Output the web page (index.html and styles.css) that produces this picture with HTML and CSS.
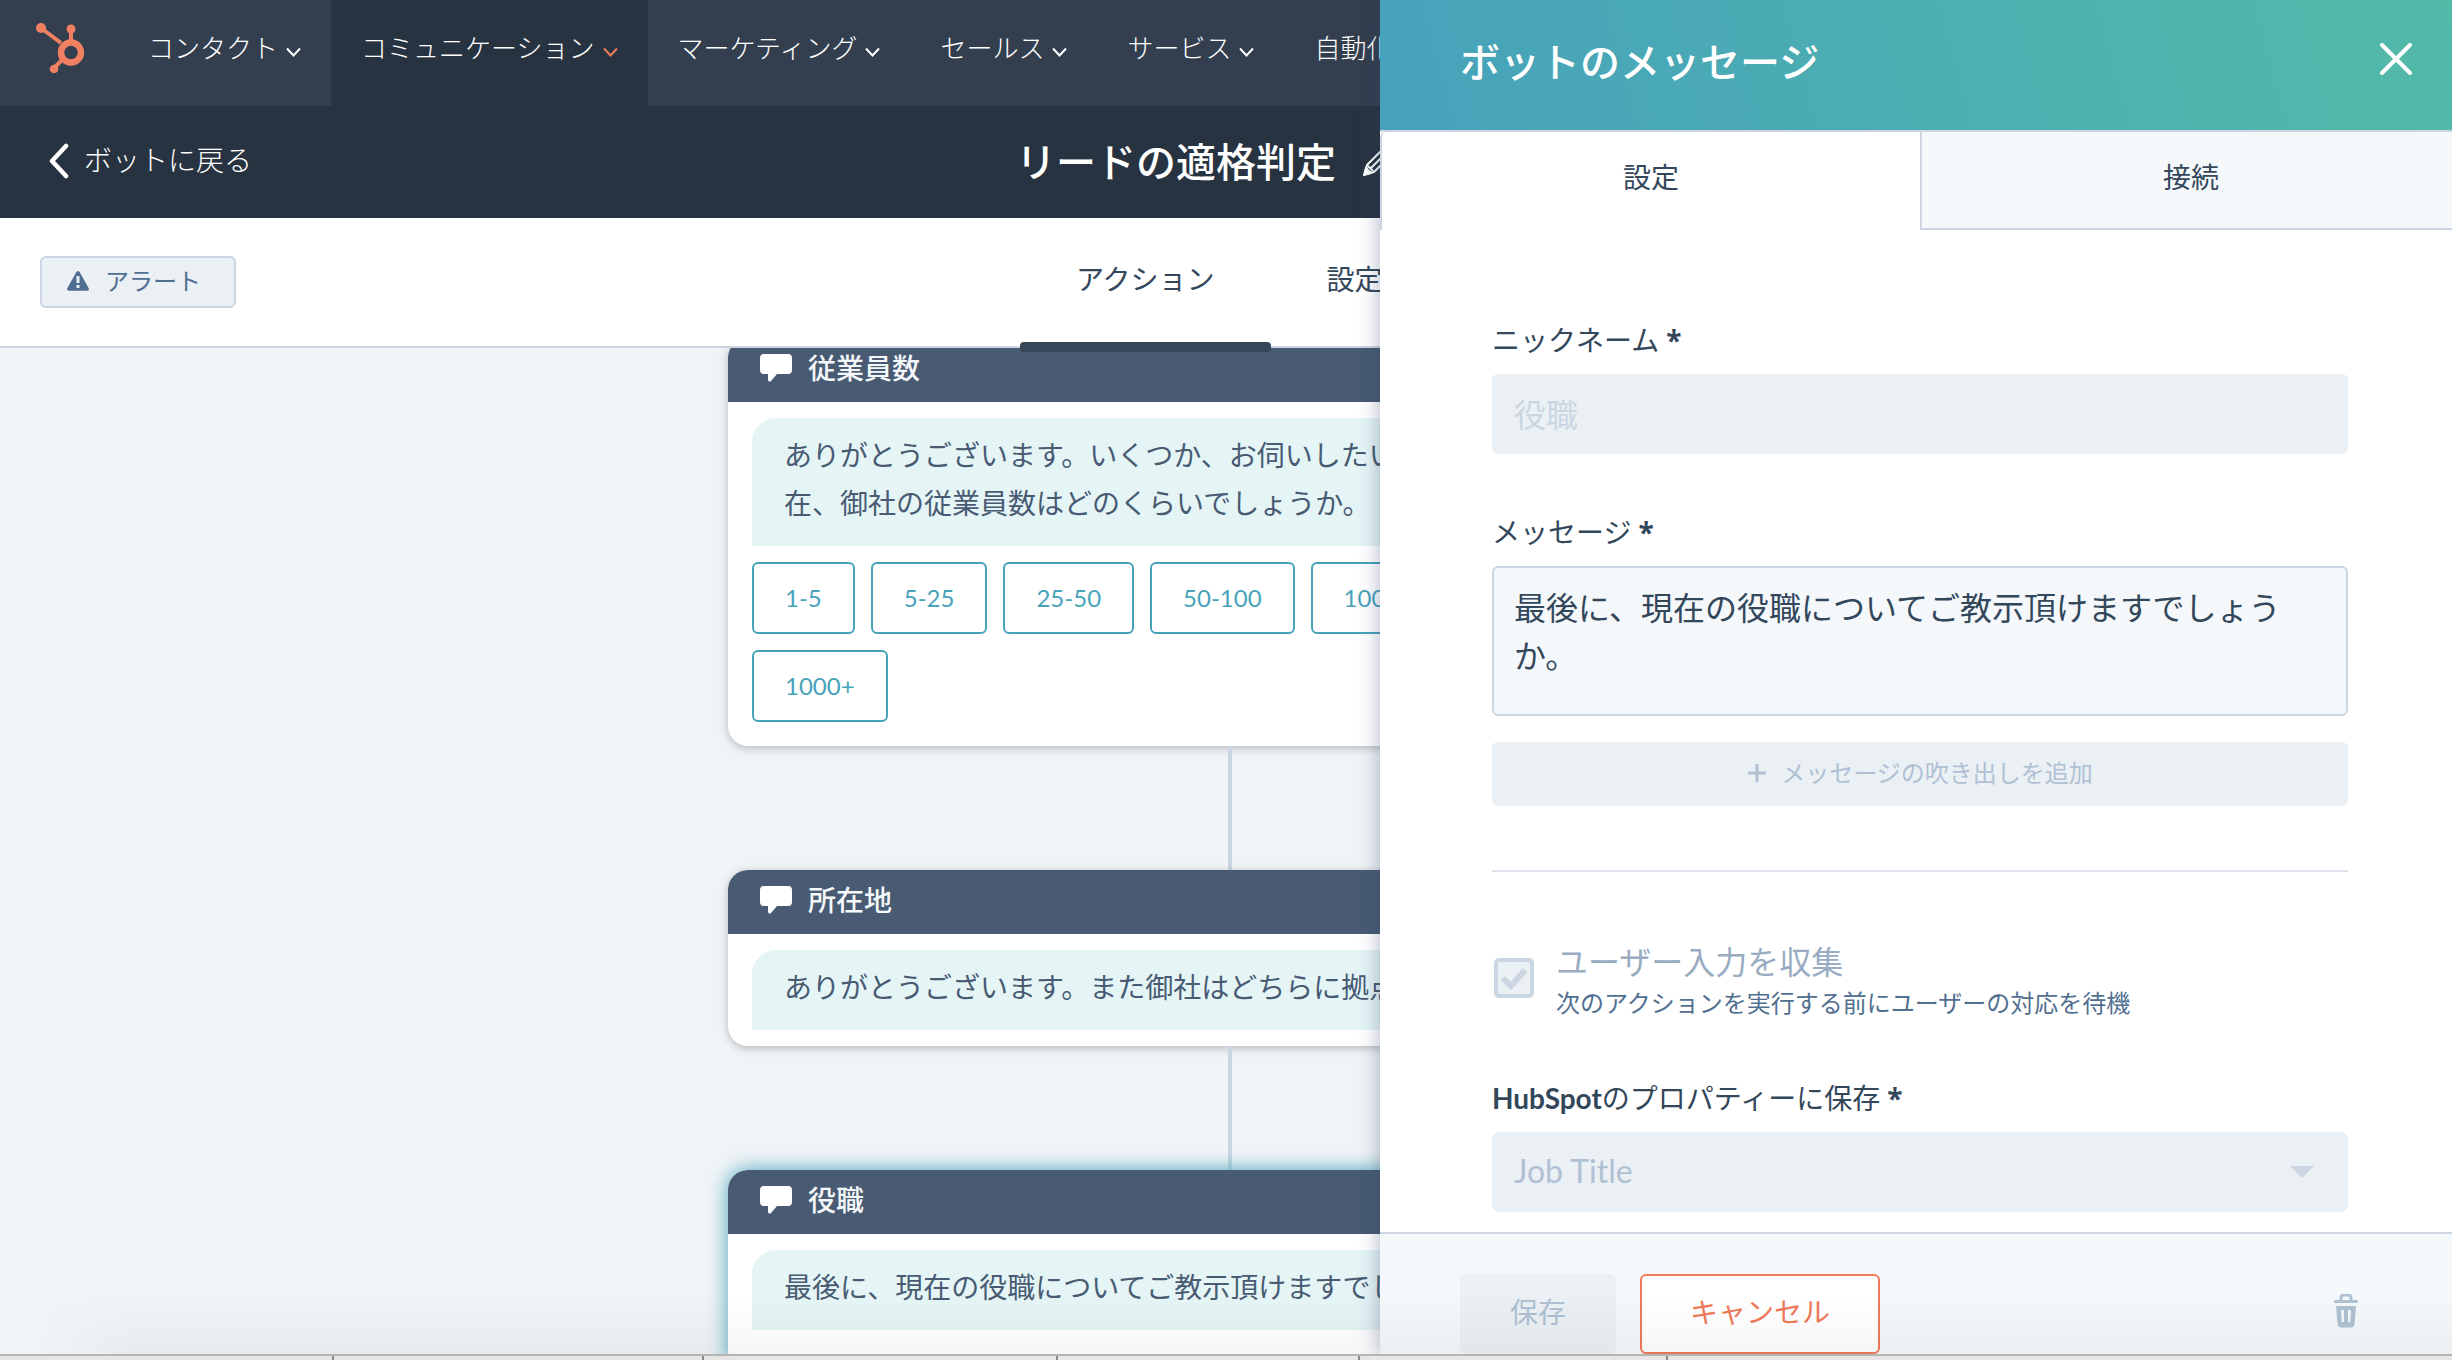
FILE: index.html
```html
<!DOCTYPE html>
<html lang="ja">
<head>
<meta charset="utf-8">
<meta name="viewport" content="width=device-width, initial-scale=1">
<title>リードの適格判定</title>
<link rel="stylesheet" href="styles.css">
</head>
<body>
<svg class="sprite" aria-hidden="true">
  <symbol id="chevron" viewBox="0 0 15 10"><path d="M1 1.500 7.500 8.500 14 1.500" fill="none" stroke="currentColor" stroke-width="2"/></symbol>
  <symbol id="speech" viewBox="0 0 32 28"><path d="M4 0h24a4 4 0 0 1 4 4v12a4 4 0 0 1-4 4H17l-6 7q-2 2-3-1l0-6H4a4 4 0 0 1-4-4V4a4 4 0 0 1 4-4z" fill="currentColor"/></symbol>
</svg>
<div class="app">
  <div class="page">
    <nav class="topnav">
      <a class="logo" href="#" aria-label="ホーム">
        <svg width="48" height="50" viewBox="0 0 48 50" fill="none" stroke="currentColor">
          <path d="M5 5 25 20M35 7v11M26 37l-9 9" stroke-width="4"/>
          <circle cx="35" cy="29.500" r="10" stroke-width="6.500"/>
          <g fill="currentColor" stroke="none"><circle cx="5" cy="5" r="5"/><circle cx="35" cy="6" r="4.500"/><circle cx="18" cy="46" r="4.300"/></g>
        </svg>
      </a>
      <a class="nav-item" href="#">コンタクト<svg class="chev"><use href="#chevron"/></svg></a>
      <a class="nav-item active" href="#">コミュニケーション<svg class="chev"><use href="#chevron"/></svg></a>
      <a class="nav-item" href="#">マーケティング<svg class="chev"><use href="#chevron"/></svg></a>
      <a class="nav-item" href="#">セールス<svg class="chev"><use href="#chevron"/></svg></a>
      <a class="nav-item" href="#">サービス<svg class="chev"><use href="#chevron"/></svg></a>
      <a class="nav-item" href="#">自動化<svg class="chev"><use href="#chevron"/></svg></a>
    </nav>

    <header class="titlebar">
      <a class="back" href="#">
        <svg width="20" height="36" viewBox="0 0 20 36"><path d="M17 3 3 18l14 15" fill="none" stroke="currentColor" stroke-width="4.500" stroke-linecap="round" stroke-linejoin="round"/></svg>
        <span>ボットに戻る</span>
      </a>
      <div class="title-group">
        <h1>リードの適格判定</h1>
        <button class="icon-button" type="button" aria-label="名前を編集">
          <svg width="28" height="28" viewBox="0 0 28 28" fill="none" stroke="currentColor" stroke-width="2" stroke-linejoin="round"><path d="M1.500 26.500 4 17 18 3l7 7-14 14zM5 18l5 5M8 20 21 7" /><path d="m1 27 2-7 5 5z" fill="currentColor"/></svg>
        </button>
      </div>
    </header>

    <div class="toolbar">
      <button class="alert-button" type="button">
        <svg width="22" height="20" viewBox="0 0 22 20"><path d="M9.300 1.200q1.700-2.400 3.400 0l9 16q.8 2.300-1.700 2.500H2q-2.500-.2-1.700-2.500z" fill="currentColor"/><path d="M11 5v7M11 14v3" stroke="#eaf0f4" stroke-width="3"/></svg>
        アラート
      </button>
      <div class="page-tabs">
        <a class="page-tab current" href="#">アクション</a>
        <a class="page-tab" href="#">設定</a>
      </div>
    </div>

    <main class="canvas">
      <div class="flow">
        <article class="card">
          <h2><svg class="speech"><use href="#speech"/></svg>従業員数</h2>
          <p class="bubble">ありがとうございます。いくつか、お伺いしたいことがあります。現在、御社の従業員数はどのくらいでしょうか。</p>
          <div class="options">
            <button type="button">1-5</button>
            <button type="button">5-25</button>
            <button type="button">25-50</button>
            <button type="button">50-100</button>
            <button type="button">100-500</button>
            <button type="button">500-1000</button>
            <button type="button">1000+</button>
          </div>
        </article>
        <div class="link"></div>
        <article class="card">
          <h2><svg class="speech"><use href="#speech"/></svg>所在地</h2>
          <p class="bubble">ありがとうございます。また御社はどちらに拠点がありますか。</p>
        </article>
        <div class="link"></div>
        <article class="card selected">
          <h2><svg class="speech"><use href="#speech"/></svg>役職</h2>
          <p class="bubble">最後に、現在の役職についてご教示頂けますでしょうか。</p>
        </article>
      </div>
    </main>
  </div>

  <aside class="panel">
    <header class="panel-head">
      <h2>ボットのメッセージ</h2>
      <button class="icon-button" type="button" aria-label="閉じる">
        <svg width="32" height="32" viewBox="0 0 32 32"><path d="m2 2 28 28M30 2 2 30" stroke="currentColor" stroke-width="4" stroke-linecap="round"/></svg>
      </button>
    </header>
    <div class="panel-tabs">
      <button class="current" type="button">設定</button>
      <button type="button">接続</button>
    </div>
    <form class="panel-body">
      <label for="nickname">ニックネーム <b class="required">*</b></label>
      <input id="nickname" class="field" type="text" value="役職" disabled>
      <label for="message">メッセージ <b class="required">*</b></label>
      <textarea id="message" class="field">最後に、現在の役職についてご教示頂けますでしょうか。</textarea>
      <button class="add-button" type="button" disabled>
        <svg width="20" height="20" viewBox="0 0 20 20"><path d="M10 1v18M1 10h18" stroke="currentColor" stroke-width="3"/></svg>
        メッセージの吹き出しを追加
      </button>
      <hr>
      <div class="check-row">
        <span class="check-box">
          <input id="collect" type="checkbox" checked disabled>
          <svg width="28" height="24" viewBox="0 0 28 24"><path d="m3 12 8 8L25 4" fill="none" stroke="#cbd6e2" stroke-width="6"/></svg>
        </span>
        <label class="check-label" for="collect">ユーザー入力を収集<small>次のアクションを実行する前にユーザーの対応を待機</small></label>
      </div>
      <label for="property" class="property-label"><b>HubSpot</b>のプロパティーに保存 <b class="required">*</b></label>
      <span class="select-box">
        <select id="property" class="field" disabled><option>Job Title</option></select>
        <svg width="24" height="12" viewBox="0 0 24 12"><path d="M0 0h24L12 12z" fill="#cbd6e2"/></svg>
      </span>
    </form>
    <footer class="panel-foot">
      <button class="save" type="button" disabled>保存</button>
      <button class="cancel" type="button">キャンセル</button>
      <button class="icon-button trash" type="button" aria-label="削除">
        <svg width="24" height="34" viewBox="0 0 24 34"><path d="M7 7V4q0-3 3-3h4q3 0 3 3v3" fill="none" stroke="currentColor" stroke-width="3"/><path d="M1 6h22q1 0 1 1.500T23 9H1Q0 9 0 7.500T1 6zM2 12h20l-1.500 18q-.4 3.500-4 3.500h-9q-3.600 0-4-3.500zm5 4 .7 12h2.300V16zm7 0v12h2.300L17 16z" fill="currentColor" fill-rule="evenodd"/></svg>
      </button>
    </footer>
  </aside>
  <div class="fade"></div>
</div>
<div class="strip"><i></i><i></i><i></i><i></i><i></i><i></i></div>
</body>
</html>
```
FILE: styles.css
```css
* { box-sizing: border-box; }

body {
  margin: 0;
  height: 100vh;
  display: flex;
  flex-direction: column;
  overflow: hidden;
  background: #f0f4f7;
  color: #33475b;
  font-family: Lato, "Noto Sans CJK JP", sans-serif;
  font-size: 28px;
  line-height: 48px;
}

h1, h2, p { margin: 0; font-weight: 500; }
a { color: inherit; text-decoration: none; }
svg { display: block; flex: none; }
button, input, textarea, select { font: inherit; color: inherit; margin: 0; }
button { cursor: pointer; }

.sprite { display: none; }

.icon-button {
  padding: 0;
  border: 0;
  background: none;
}

.app {
  position: relative;
  flex: 1;
  min-height: 0;
  overflow: hidden;
}

.page {
  display: flex;
  flex-direction: column;
  width: calc(100% + 8px);
  height: 100%;
}

/* top navigation */
.topnav {
  display: flex;
  height: 106px;
  flex: none;
  background: #333f4f;
  color: #fff;
  font-size: 26px;
  font-weight: 300;
}

.logo {
  width: 118px;
  padding: 23px 34px 0 36px;
  color: #f08061;
}

.nav-item {
  display: flex;
  gap: 8px;
  padding: 24px 30px 0;
  white-space: nowrap;
}

.nav-item.active { background: #283341; }
.nav-item.active .chev { color: #f07a5a; }

.chev {
  width: 15px;
  height: 10px;
  margin-top: 23px;
}

/* title bar */
.titlebar,
.toolbar {
  display: grid;
  grid-template-columns: 1fr 420px 1fr;
  flex: none;
}

.titlebar {
  grid-template-columns: 1fr 428px 1fr;
  height: 112px;
  background: #283341;
  color: #fff;
}

.back {
  display: flex;
  align-items: center;
  gap: 15px;
  height: 110px;
  padding-left: 49px;
  font-weight: 300;
}

.back span { padding-bottom: 3px; }

.title-group {
  display: flex;
  align-items: center;
  gap: 27px;
}

.title-group h1 {
  font-size: 40px;
  white-space: nowrap;
}

/* toolbar */
.toolbar {
  height: 130px;
  background: #fff;
  border-bottom: 2px solid #cbd6e2;
}

.alert-button {
  display: flex;
  align-items: center;
  align-self: center;
  justify-self: start;
  gap: 16px;
  height: 52px;
  margin-left: 40px;
  padding: 0 33px 2px 25px;
  border: 2px solid #cbd6e2;
  border-radius: 6px;
  background: #eaf0f4;
  color: #506e91;
  font-size: 24px;
}

.page-tabs { display: flex; }

.page-tab {
  position: relative;
  padding: 37px 56px 0;
  white-space: nowrap;
}

.page-tab.current::after {
  content: "";
  position: absolute;
  left: 0;
  right: 0;
  bottom: -6px;
  height: 10px;
  border-radius: 4px;
  background: #374659;
}

/* conversation flow */
.canvas {
  flex: 1;
  min-height: 0;
  overflow: hidden;
}

.flow {
  display: flex;
  flex-direction: column;
  align-items: center;
  margin-top: -10px;
}

.card {
  width: 1004px;
  padding-bottom: 16px;
  border-radius: 20px;
  background: #fff;
  box-shadow: 0 2px 8px rgba(0, 0, 0, 0.25);
}

.card.selected {
  padding-bottom: 40px;
  box-shadow: 0 0 20px #47a3ba;
}

.card h2 {
  display: flex;
  align-items: center;
  gap: 16px;
  height: 64px;
  padding: 0 32px 4px;
  border-radius: 20px 20px 0 0;
  background: #485b73;
  color: #f5f8fa;
  font-size: 28px;
}

.speech {
  width: 32px;
  height: 28px;
  color: #fff;
}

.bubble {
  margin: 16px 24px 0;
  padding: 13px 32px 19px;
  border-radius: 24px 24px 24px 0;
  background: #e5f5f6;
  color: #485b73;
  font-weight: 400;
}

.options {
  display: flex;
  flex-wrap: wrap;
  gap: 16px;
  padding: 16px 24px 8px;
}

.options button {
  height: 72px;
  padding: 0 31px;
  border: 2px solid #47a3ba;
  border-radius: 6px;
  background: #fff;
  color: #47a3ba;
  font-size: 24px;
}

.link {
  width: 4px;
  height: 124px;
  background: #cbd6e2;
}

/* side panel */
.panel {
  position: absolute;
  top: 0;
  right: -8px;
  bottom: 0;
  display: flex;
  flex-direction: column;
  width: 1080px;
  background: #fff;
  box-shadow: 0 0 20px rgba(45, 62, 100, 0.4);
}

.panel-head {
  display: flex;
  align-items: center;
  justify-content: space-between;
  flex: none;
  height: 130px;
  padding: 0 48px 12px 80px;
  background: linear-gradient(75deg, #46a2bb, #53baa8);
  color: #fff;
}

.panel-head h2 {
  padding-top: 6px;
  font-size: 40px;
}

.panel-tabs {
  display: grid;
  grid-template-columns: 1fr 1fr;
  flex: none;
  height: 100px;
  border-top: 2px solid #cbd6e2;
}

.panel-tabs button {
  padding: 0 0 6px;
  border: solid #cbd6e2;
  border-width: 0 0 2px 2px;
  background: #f5f8fb;
}

.panel-tabs .current {
  padding-bottom: 8px;
  border-bottom: 0;
  border-top-left-radius: 6px;
  background: #fff;
}

.panel-body {
  display: flex;
  flex-direction: column;
  flex: 1;
  min-height: 0;
  overflow: hidden;
  padding: 32px 112px 0;
}

.panel-body > label { margin: 54px 0 10px; }

.required {
  font-family: "Open Sans", sans-serif;
  line-height: 1;
}

.field {
  flex: none;
  width: 100%;
  height: 80px;
  padding: 0 20px 2px;
  border: 2px solid #eaf0f4;
  border-radius: 6px;
  background: #eaf0f4;
  color: #cbd6e2;
  font-size: 32px;
  opacity: 1;
}

textarea.field {
  display: block;
  height: 150px;
  padding: 16px 20px;
  border-color: #cbd6e2;
  background: #f5f8fb;
  color: #33475b;
  resize: none;
  overflow: hidden;
}

.add-button {
  display: flex;
  align-items: center;
  justify-content: center;
  gap: 14px;
  flex: none;
  height: 64px;
  margin-top: 26px;
  padding-bottom: 3px;
  border: 0;
  border-radius: 6px;
  background: #eaf0f4;
  color: #b0c1d4;
  font-size: 24px;
}

hr {
  flex: none;
  width: 100%;
  height: 2px;
  margin: 64px 0 70px;
  border: 0;
  background: #dfe3eb;
}

.check-row {
  display: flex;
  align-items: flex-start;
  gap: 22px;
  padding-left: 2px;
}

.check-box,
.select-box { display: grid; }

.check-box {
  place-items: center;
  margin-top: 16px;
}

.check-box > *,
.select-box > * { grid-area: 1 / 1; }

.check-box input {
  appearance: none;
  width: 40px;
  height: 40px;
  border: 4px solid #cbd6e2;
  border-radius: 5px;
  background: #eaf0f4;
}

.check-label {
  display: flex;
  flex-direction: column;
  color: #99acc2;
  font-size: 32px;
  line-height: 40px;
}

.check-label small {
  color: #516f90;
  font-size: 24px;
  line-height: 42px;
}

.panel-body > .property-label { margin-top: 50px; }

.select-box { align-items: center; }

.select-box select {
  appearance: none;
  color: #b0c1d4;
}

.select-box svg {
  justify-self: end;
  margin-right: 34px;
}

.panel-foot {
  display: flex;
  align-items: flex-start;
  gap: 24px;
  flex: none;
  height: 122px;
  padding: 40px 102px 0 80px;
  border-top: 2px solid #cbd6e2;
  background: #f5f8fb;
}

.save,
.cancel {
  height: 80px;
  padding: 0 48px 4px;
  border: 2px solid #f07a5a;
  border-radius: 6px;
  background: #fff;
  color: #f07a5a;
}

.save {
  border-color: #eaf0f4;
  background: #eaf0f4;
  color: #b0c1d4;
}

.trash {
  margin: 20px 0 0 auto;
  color: #b0c1d4;
}

/* soft shade above the window edge */
.fade {
  position: absolute;
  left: 40px;
  right: 0;
  bottom: 0;
  height: 60px;
  background: linear-gradient(rgba(0, 0, 0, 0), rgba(0, 0, 0, 0.035));
  mask-image: linear-gradient(90deg, transparent, #000 100px);
  pointer-events: none;
}

.strip {
  display: grid;
  grid-template-columns: 334fr 370fr 354fr 302fr 308fr 784fr;
  flex: none;
  height: 6px;
  border-top: 2px solid #b5b5b5;
  background: #e6e6e6;
}

.strip i { border-right: 2px solid #888; }
.strip i:last-child { border-right: 0; }
```
